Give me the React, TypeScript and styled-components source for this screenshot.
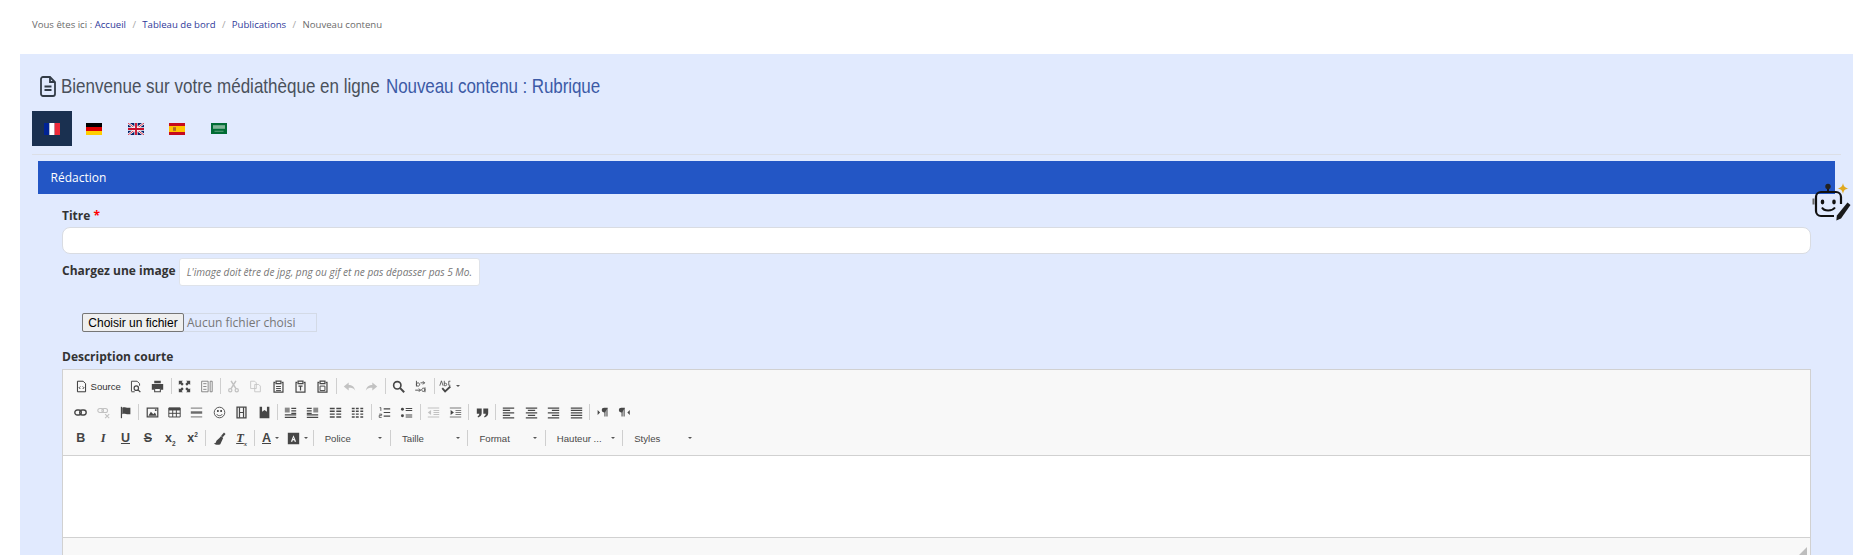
import React from "react";
import styled, { createGlobalStyle } from "styled-components";

const GlobalStyle = createGlobalStyle`
  html, body {
    margin: 0;
    height: 100%;
    overflow: hidden;
    background: #fff;
    font-family: "Open Sans", "Liberation Sans", sans-serif;
  }
`;

const Page = styled.div`
  position: relative;
  height: 555px;
  overflow: hidden;
`;

// fil d'ariane
const Breadcrumb = styled.nav`
  height: 54px;
  box-sizing: border-box;
  padding: 17px 0 0 32px;
  font-size: 9.6px;
  line-height: 16px;
  color: #6b6b6b;
  display: flex;
`;

const Crumb = styled.a`
  color: #2f3a9a;
`;

const CrumbSep = styled.span`
  color: #a5a5a5;
  margin: 0 6.4px;
`;

const Panel = styled.main`
  margin: 0 4px 0 20px;
  background: #e1eafe;
  height: 560px;
  padding: 0 12px;
`;

const Heading = styled.h1`
  margin: 0;
  height: 57px;
  box-sizing: border-box;
  padding: 13.5px 0 6.5px 8px;
  display: flex;
  align-items: center;
  gap: 5px;
  font-family: "Liberation Sans", sans-serif;
  font-weight: 400;
  font-size: 21px;
  line-height: 26px;
  color: #4a515b;
  svg {
    flex: none;
  }
`;

// pas de police étroite installée : on resserre le texte
const HeadingText = styled.span`
  display: inline-block;
  white-space: nowrap;
  transform: scaleX(0.81);
  transform-origin: left center;
`;

const HeadingAccent = styled.span`
  margin-left: 2px;
  letter-spacing: -0.12px;
  color: #3c5aa6;
`;

const Tabs = styled.div`
  display: flex;
  height: 35px;
  padding-bottom: 8px;
  border-bottom: 1px solid #dcdfe6;
`;

const Tab = styled.div<{ $active?: boolean }>`
  width: 40px;
  height: 35px;
  margin-right: 1.8px;
  display: flex;
  align-items: center;
  justify-content: center;
  background: ${({ $active }) => ($active ? "#1a3050" : "transparent")};
`;

const SectionBar = styled.div`
  margin: 6px 6px 0;
  height: 33px;
  padding-left: 12.5px;
  background: #2356c5;
  color: #fff;
  font-size: 12px;
  line-height: 33px;
`;

const Form = styled.div`
  padding: 0 30px;
`;

const FieldLabel = styled.label`
  display: block;
  font-weight: 700;
  font-size: 12px;
  line-height: 16px;
  color: #333;
`;

const TitleLabel = styled(FieldLabel)`
  margin-top: 14px;
`;

const ImageLabel = styled(FieldLabel)`
  margin-top: 5px;
`;

const DescLabel = styled(FieldLabel)`
  margin-top: 17px;
`;

const Required = styled.span`
  color: #f00;
`;

const TitleField = styled.div`
  height: 27px;
  margin-top: 3px;
  background: #fff;
  border: 1px solid #d9dce2;
  border-radius: 8px;
  box-sizing: border-box;
`;

const ImageRow = styled.div`
  margin-top: 4px;
  display: flex;
  align-items: flex-start;
  gap: 3px;
`;

const Hint = styled.div`
  width: 301px;
  height: 28px;
  box-sizing: border-box;
  background: #fff;
  border: 1px solid #dfe3ea;
  border-radius: 3px;
  font-style: italic;
  font-size: 10.1px;
  line-height: 26px;
  padding-left: 7px;
  color: #777;
  white-space: nowrap;
`;

const FileRow = styled.div`
  display: flex;
  margin: 27px 0 0 20px;
  width: 235px;
  height: 19px;
  box-sizing: border-box;
  border: 1px solid #d3dae6;
`;

const FileButton = styled.button`
  width: 102px;
  height: 19px;
  margin: -1px 0 0 -1px;
  padding: 0;
  box-sizing: border-box;
  background: #efefef;
  border: 1px solid #767676;
  border-radius: 2px;
  font-family: "Liberation Sans", Arial, sans-serif;
  font-size: 12px;
  color: #000;
`;

const FileName = styled.span`
  padding-left: 3px;
  font-size: 12px;
  line-height: 17px;
  color: #777;
`;

const Editor = styled.div`
  margin-top: 4px;
  border: 1px solid #d1d1d1;
  background: #f8f8f8;
`;

const Toolbar = styled.div`
  height: 86px;
  box-sizing: border-box;
  padding: 3px 0 0 6.5px;
  border-bottom: 1px solid #d1d1d1;
`;

const ToolRow = styled.div`
  display: flex;
  align-items: center;
  height: 26px;
  color: #474747;
`;

const ToolBtn = styled.span<{ $off?: boolean; $w?: number }>`
  flex: none;
  width: ${({ $w }) => $w ?? 22.4}px;
  height: 22px;
  display: flex;
  align-items: center;
  justify-content: center;
  opacity: ${({ $off }) => ($off ? 0.3 : 1)};
`;

const SourceBtn = styled(ToolBtn)`
  justify-content: flex-start;
  padding-left: 5px;
  box-sizing: border-box;
  gap: 3px;
  font-family: "Liberation Sans", Arial, sans-serif;
  font-size: 9.6px;
  color: #333;
`;

// boutons de mise en forme : B, I, U, S...
const Letter = styled.span<{ $serif?: boolean; $italic?: boolean; $line?: string }>`
  font-family: ${({ $serif }) => ($serif ? '"Liberation Serif", serif' : '"Liberation Sans", Arial, sans-serif')};
  font-weight: 700;
  font-style: ${({ $italic }) => ($italic ? "italic" : "normal")};
  font-size: 12.5px;
  line-height: 13px;
  color: #444;
  text-decoration: ${({ $line }) => $line ?? "none"};
  sub,
  sup {
    font-size: 6.5px;
    line-height: 0;
  }
`;

const Sep = styled.span`
  flex: none;
  width: 1px;
  height: 16px;
  margin: 0 1.6px;
  background: #cfcfcf;
`;

const Caret = styled.span`
  flex: none;
  width: 0;
  height: 0;
  margin-left: 4px;
  border-left: 2.4px solid transparent;
  border-right: 2.4px solid transparent;
  border-top: 2.4px solid #555;
`;

const Combo = styled.span`
  flex: none;
  width: 73.2px;
  height: 22px;
  box-sizing: border-box;
  padding: 0 6px 0 9.5px;
  display: flex;
  align-items: center;
  justify-content: space-between;
  font-family: "Liberation Sans", Arial, sans-serif;
  font-size: 9.6px;
  color: #484848;
`;

const Editable = styled.div`
  height: 81px;
  background: #fff;
`;

const EditorFoot = styled.div`
  height: 30px;
  border-top: 1px solid #d1d1d1;
  position: relative;
`;

const Grip = styled.svg`
  position: absolute;
  right: 3px;
  top: 9px;
`;

const BotBadge = styled.svg`
  position: absolute;
  left: 1810px;
  top: 182px;
`;

const Ico = ({ children }: { children: React.ReactNode }) => (
  <svg width="13" height="13" viewBox="0 0 16 16" fill="none" stroke="currentColor" strokeWidth="1.5">
    {children}
  </svg>
);

const Fill = ({ d }: { d: string }) => <path d={d} fill="currentColor" stroke="none" />;

const icons: Record<string, React.ReactNode> = {
  source: <><path d="M3 1.500h7l3 3v10H3z" strokeWidth="1.200" /><path d="M6.500 8 5 9.500 6.500 11M9.500 8 11 9.500 9.500 11" strokeWidth="1.200" /></>,
  preview: <><path d="M3 14V1.500h7l3 3V7M3 14.500h4" strokeWidth="1.200" /><circle cx="9" cy="10" r="2.700" /><path d="m11 12 3 3" /></>,
  print: <><Fill d="M4 1h8v3H4zM1 5h14v7h-3v-2H4v2H1z" /><path d="M4.500 10.500h7v4h-7z" strokeWidth="1.300" /></>,
  maximize: <Fill d="M1 1h5L4.500 2.500 7 5 5 7 2.500 4.500 1 6zM15 1v5l-1.500-1.500L11 7 9 5l2.500-2.500L10 1zM1 15v-5l1.500 1.500L5 9l2 2-2.500 2.500L6 15zM15 15h-5l1.500-1.500L9 11l2-2 2.500 2.500L15 10z" />,
  blocks: <g opacity=".75"><path d="M2 1.500h8v13H2z" strokeWidth="1" /><path d="M12.500 1.500H15v13h-2.500zM4 4.500h4M4 8h4M4 11.500h4" strokeWidth="1" /></g>,
  cut: <><circle cx="4" cy="12.500" r="2" /><circle cx="12" cy="12.500" r="2" /><path d="M5 10.500 11 1M11 10.500 5 1" strokeWidth="1.800" /></>,
  copy: <><path d="M2 1.500h5l2 2v7H2z" strokeWidth="1" /><path d="M7 5.500h5l2 2v7H7z" strokeWidth="1" /></>,
  paste: <><path d="M4 3H2.500v12h11V3H12" /><path d="M5 1.500h6v3H5z" /><path d="M5 8h6M5 10.500h6M5 13h6" strokeWidth="1.200" /></>,
  pasteT: <><path d="M4 3H2.500v12h11V3H12" /><path d="M5 1.500h6v3H5z" /><path d="M5.500 7.500h5M8 7.500V13" /></>,
  pasteW: <><path d="M4 3H2.500v12h11V3H12" /><path d="M5 1.500h6v3H5z" /><path d="M5 7.500h6v5.500H5z" strokeWidth="1.200" /></>,
  undo: <Fill d="M7 3v3c4 0 7 2 8 7-2-3-4-3.500-8-3.500V13L1 8z" />,
  redo: <Fill d="M9 3v3c-4 0-7 2-8 7 2-3 4-3.500 8-3.500V13l6-5z" />,
  find: <><circle cx="6.500" cy="6.500" r="4.500" strokeWidth="2" /><path d="m10 10 5 5" strokeWidth="2.500" /></>,
  replace: <><path d="M3 1v7M3 5.500a2 2 0 1 1 0 .1M1.500 12.500H8M6 10.500l2 2-2 2" strokeWidth="1.100" /><path d="M13.500 9v6M13.500 12a2 2 0 1 0 0 .1M8 3.500h5M11 1.500l2 2-2 2" strokeWidth="1.100" /></>,
  spell: <><path d="M1 7 3 1l2 6M6.500 1v6h1.500a1.500 1.500 0 0 0 0-3H6.500M14 1.500h-2v5h2" strokeWidth="1" /><path d="m4 10 3.500 4L14 8" strokeWidth="2.200" /></>,
  link: <><rect x="1" y="5" width="8" height="6" rx="3" strokeWidth="1.700" /><rect x="7" y="5" width="8" height="6" rx="3" strokeWidth="1.700" /></>,
  unlink: <><rect x="1" y="3" width="7" height="5" rx="2.500" strokeWidth="1.300" /><rect x="6" y="3" width="7" height="5" rx="2.500" strokeWidth="1.300" /><path d="m10 10 5 5M15 10l-5 5" strokeWidth="1.300" /></>,
  anchor: <><path d="M3 1v14" strokeWidth="1.500" /><Fill d="M4 2c3-1.500 5 1 10 0v8c-5 1-7-1.500-10 0z" /></>,
  image: <><path d="M1.500 2.500h13v11h-13z" /><Fill d="M3 12l3-5 3 3 2-2 2 4zM11 4h2v2h-2z" /></>,
  table: <><path d="M1 2.500h14v11H1z" strokeWidth="1.200" /><Fill d="M1 2h14v3.500H1z" /><path d="M1 9h14M5.800 5v8.500M10.300 5v8.500" strokeWidth="1.200" /></>,
  hr: <><path d="M1 2.500h14M1 13.500h14" strokeWidth="1.600" opacity=".6" /><path d="M1 8h14" strokeWidth="3" opacity=".8" /></>,
  smiley: <><circle cx="8" cy="8" r="6.500" strokeWidth="1.100" /><Fill d="M5 5h2v2.500H5zM9 5h2v2.500H9z" /><path d="M4.500 10c1.500 2.500 5.500 2.500 7 0" strokeWidth="1.100" /></>,
  iframe: <><path d="M2.500 1.500h11v13h-11z" strokeWidth="1.600" /><path d="M5.500 1.500v13M10.500 1.500v13M5.500 8h5" strokeWidth="1.500" /></>,
  block: <Fill d="M2 1h3v6l3-2 3 2V1h3v14H2z" />,
  blockL: <><path d="M1 2h6v6H1z" fill="#8a8a8a" stroke="none" /><path d="M9 3h6M9 6h6M9 9h6M1 11h14M1 14h14" strokeWidth="1.400" /></>,
  blockR: <><path d="M9 2h6v6H9z" fill="#8a8a8a" stroke="none" /><path d="M1 3h6M1 6h6M1 9h6M1 11h14M1 14h14" strokeWidth="1.400" /></>,
  cols2: <path d="M1 3h6M9 3h6M1 6.500h6M9 6.500h6M1 10h6M9 10h6M1 13.500h6M9 13.500h6" strokeWidth="1.700" />,
  cols3: <path d="M1 3h3.500M6 3h3.500M11.500 3H15M1 6.500h3.500M6 6.500h3.500M11.500 6.500H15M1 10h3.500M6 10h3.500M11.500 10H15M1 13.500h3.500M6 13.500h3.500M11.500 13.500H15" strokeWidth="1.700" />,
  ol: <><path d="M7 3.500h8M7 8h8M7 12.500h8" strokeWidth="1.500" /><path d="M2 2h1.500v4M1.500 10h3v1.500h-3V14h3" strokeWidth="1" /></>,
  ul: <><circle cx="3" cy="4" r="1.800" fill="currentColor" stroke="none" /><circle cx="3" cy="12" r="1.800" fill="currentColor" stroke="none" /><path d="M7 3h8M7 5.500h8M7 11h8M7 13.500h8" strokeWidth="1.300" /></>,
  outdent: <><path d="M1 2.500h14M8 5.500h7M8 8h7M8 10.500h7M1 13.500h14" strokeWidth="1.300" /><Fill d="M1 8l4-3v6z" /></>,
  indent: <><path d="M1 2.500h14M8 5.500h7M8 8h7M8 10.500h7M1 13.500h14" strokeWidth="1.300" opacity=".7" /><Fill d="M6 8 2 5v6z" /></>,
  quote: <Fill d="M1 3h6v6c0 3-2 4.500-4.500 5L2 12.500C3.500 12 4 11 4 9.500H1zM9 3h6v6c0 3-2 4.500-4.500 5l-.5-1.500c1.500-.5 2-1.500 2-3H9z" />,
  alignL: <path d="M1 2.500h14M1 5.500h9M1 8.500h14M1 11.500h9M1 14.500h14" strokeWidth="1.500" />,
  alignC: <path d="M1 2.500h14M3.500 5.500h9M1 8.500h14M3.500 11.500h9M1 14.500h14" strokeWidth="1.500" />,
  alignR: <path d="M1 2.500h14M6 5.500h9M1 8.500h14M6 11.500h9M1 14.500h14" strokeWidth="1.500" />,
  alignJ: <path d="M1 2.500h14M1 5.500h14M1 8.500h14M1 11.500h14M1 14.500h14" strokeWidth="1.500" />,
  ltr: <><path d="M11 13V2.500M13.500 13V2.500" strokeWidth="1.300" /><Fill d="M14.500 2H10a3 3 0 0 0 0 6h1zM2 5l3 3-3 3z" /></>,
  rtl: <><path d="M5 13V2.500M7.500 13V2.500" strokeWidth="1.300" /><Fill d="M8.500 2H4a3 3 0 0 0 0 6h1zM14.500 5l-3 3 3 3z" /></>,
  brush: <><Fill d="M10 5l2.500 2.500L9 15c-2 1-6 1-8-1 2 0 3-1 3-3 1-1 3-2 6-6z" /><path d="M11 5.500 14.500 1.500" strokeWidth="2.500" /></>,
  bgColor: <Fill d="M1 1h14v14H1zM8 4l-3.300 8h1.800l.7-2h1.600l.7 2h1.800zm0 2.800L7.500 8.500h1z" />,
};

type Tool = { icon: string; off?: boolean };
const I = (icon: string, off?: boolean): Tool => ({ icon, off });

const Tools = ({ items }: { items: Tool[] }) => (
  <>
    {items.map((t) => (
      <ToolBtn key={t.icon} $off={t.off}>
        <Ico>{icons[t.icon]}</Ico>
      </ToolBtn>
    ))}
  </>
);

const combos = ["Police", "Taille", "Format", "Hauteur ...", "Styles"];

const flagProps = { width: 16, height: 12, preserveAspectRatio: "none" };

const FranceFlag = () => (
  <svg {...flagProps} viewBox="0 0 3 2">
    <rect width="1" height="2" fill="#002395" />
    <rect x="1" width="1" height="2" fill="#fff" />
    <rect x="2" width="1" height="2" fill="#ed2939" />
  </svg>
);

const GermanFlag = () => (
  <svg {...flagProps} viewBox="0 0 3 3">
    <rect width="3" height="1" fill="#000" />
    <rect y="1" width="3" height="1" fill="#d00" />
    <rect y="2" width="3" height="1" fill="#ffce00" />
  </svg>
);

const UkFlag = () => (
  <svg {...flagProps} viewBox="0 0 60 40">
    <rect width="60" height="40" fill="#012169" />
    <path d="M0 0l60 40M60 0 0 40" stroke="#fff" strokeWidth="8" />
    <path d="M0 0l60 40M60 0 0 40" stroke="#c8102e" strokeWidth="3" />
    <path d="M30 0v40M0 20h60" stroke="#fff" strokeWidth="12" />
    <path d="M30 0v40M0 20h60" stroke="#c8102e" strokeWidth="7" />
  </svg>
);

const SpainFlag = () => (
  <svg {...flagProps} viewBox="0 0 16 12">
    <rect width="16" height="12" fill="#c60b1e" />
    <rect y="3" width="16" height="6" fill="#ffc400" />
    <rect x="4" y="4.200" width="3" height="3.600" fill="#ad6a2a" />
  </svg>
);

const SaudiFlag = () => (
  <svg width="16" height="11" viewBox="0 0 16 11">
    <rect width="16" height="11" fill="#006c35" />
    <rect x="2" y="2.200" width="12" height="3.600" fill="#a9cdb7" opacity=".75" />
    <rect x="3.500" y="7.800" width="9" height=".8" fill="#a9cdb7" opacity=".7" />
  </svg>
);

export default function App() {
  return (
    <Page>
      <GlobalStyle />
      <Breadcrumb>
        Vous êtes ici :&nbsp;<Crumb>Accueil</Crumb>
        <CrumbSep>/</CrumbSep>
        <Crumb>Tableau de bord</Crumb>
        <CrumbSep>/</CrumbSep>
        <Crumb>Publications</Crumb>
        <CrumbSep>/</CrumbSep>
        Nouveau contenu
      </Breadcrumb>

      <Panel>
        <Heading>
          <svg width="16" height="21" viewBox="0 0 16 21" fill="none" stroke="#333c47" strokeWidth="1.800">
            <path d="M3 1h7l5 5v12a2 2 0 0 1-2 2H3a2 2 0 0 1-2-2V3a2 2 0 0 1 2-2z" />
            <path d="M10 1v5h5M4.500 10.500h7M4.500 14h7" />
          </svg>
          <HeadingText>
            Bienvenue sur votre médiathèque en ligne <HeadingAccent>Nouveau contenu : Rubrique</HeadingAccent>
          </HeadingText>
        </Heading>

        <Tabs>
          <Tab $active><FranceFlag /></Tab>
          <Tab><GermanFlag /></Tab>
          <Tab><UkFlag /></Tab>
          <Tab><SpainFlag /></Tab>
          <Tab><SaudiFlag /></Tab>
        </Tabs>

        <SectionBar>Rédaction</SectionBar>

        <Form>
          <TitleLabel>
            Titre <Required>*</Required>
          </TitleLabel>
          <TitleField />
          <ImageRow>
            <ImageLabel>Chargez une image</ImageLabel>
            <Hint>L'image doit être de jpg, png ou gif et ne pas dépasser pas 5 Mo.</Hint>
          </ImageRow>
          <FileRow>
            <FileButton type="button">Choisir un fichier</FileButton>
            <FileName>Aucun fichier choisi</FileName>
          </FileRow>
          <DescLabel>Description courte</DescLabel>

          <Editor>
            <Toolbar>
              <ToolRow>
                <SourceBtn $w={54.8}>
                  <Ico>{icons.source}</Ico>
                  Source
                </SourceBtn>
                <Tools items={[I("preview"), I("print")]} />
                <Sep />
                <Tools items={[I("maximize"), I("blocks")]} />
                <Sep />
                <Tools items={[I("cut", true), I("copy", true), I("paste"), I("pasteT"), I("pasteW")]} />
                <Sep />
                <Tools items={[I("undo", true), I("redo", true)]} />
                <Sep />
                <Tools items={[I("find"), I("replace")]} />
                <Sep />
                <ToolBtn $w={27}>
                  <Ico>{icons.spell}</Ico>
                  <Caret />
                </ToolBtn>
              </ToolRow>
              <ToolRow>
                <Tools items={[I("link"), I("unlink", true), I("anchor")]} />
                <Sep />
                <Tools items={[I("image"), I("table"), I("hr"), I("smiley"), I("iframe"), I("block")]} />
                <Sep />
                <Tools items={[I("blockL"), I("blockR"), I("cols2"), I("cols3")]} />
                <Sep />
                <Tools items={[I("ol"), I("ul")]} />
                <Sep />
                <Tools items={[I("outdent", true), I("indent")]} />
                <Sep />
                <Tools items={[I("quote")]} />
                <Sep />
                <Tools items={[I("alignL"), I("alignC"), I("alignR"), I("alignJ")]} />
                <Sep />
                <Tools items={[I("ltr"), I("rtl")]} />
              </ToolRow>
              <ToolRow>
                <ToolBtn><Letter>B</Letter></ToolBtn>
                <ToolBtn><Letter $serif $italic>I</Letter></ToolBtn>
                <ToolBtn><Letter $line="underline">U</Letter></ToolBtn>
                <ToolBtn><Letter $line="line-through">S</Letter></ToolBtn>
                <ToolBtn><Letter>x<sub>2</sub></Letter></ToolBtn>
                <ToolBtn><Letter>x<sup>2</sup></Letter></ToolBtn>
                <Sep />
                <Tools items={[I("brush")]} />
                <ToolBtn><Letter $serif $italic $line="underline">T<sub>x</sub></Letter></ToolBtn>
                <Sep />
                <ToolBtn $w={27}>
                  <Letter $line="underline">A</Letter>
                  <Caret />
                </ToolBtn>
                <ToolBtn $w={27}>
                  <Ico>{icons.bgColor}</Ico>
                  <Caret />
                </ToolBtn>
                <Sep />
                {combos.map((c, i) => (
                  <React.Fragment key={c}>
                    <Combo>
                      {c}
                      <Caret />
                    </Combo>
                    {i < combos.length - 1 && <Sep />}
                  </React.Fragment>
                ))}
              </ToolRow>
            </Toolbar>
            <Editable />
            <EditorFoot>
              <Grip width="9" height="9" viewBox="0 0 9 9">
                <path d="M9 0v9H0z" fill="#bdbdbd" />
              </Grip>
            </EditorFoot>
          </Editor>
        </Form>
      </Panel>

      <BotBadge width="42" height="42" viewBox="0 0 42 42" fill="none">
        <path d="M18 5v5" stroke="#111" strokeWidth="1.800" />
        <circle cx="18" cy="4.500" r="2.700" fill="#222" />
        <path d="M24 34H11a5 5 0 0 1-5-5V15a5 5 0 0 1 5-5h15a5 5 0 0 1 5 5v7" stroke="#111" strokeWidth="2.200" />
        <rect x="2.500" y="16.500" width="2" height="6" fill="#666" />
        <ellipse cx="12.500" cy="20" rx="1.800" ry="2.400" fill="#111" />
        <ellipse cx="24" cy="20" rx="1.800" ry="2.400" fill="#111" />
        <path d="M12 25.500c2 4 10 4 13 0" stroke="#111" strokeWidth="2" />
        <path d="M33 1c.7 3.500 1.800 4.800 5.500 5.500-3.700.7-4.800 1.800-5.500 5.500-.7-3.700-1.800-4.800-5.500-5.500C31.200 5.800 32.300 4.500 33 1z" fill="#e0a91f" />
        <path d="M37.500 20.500l3 2.500-9.500 13.500-4.700 2 .6-5z" fill="#1a1a1a" />
      </BotBadge>
    </Page>
  );
}
